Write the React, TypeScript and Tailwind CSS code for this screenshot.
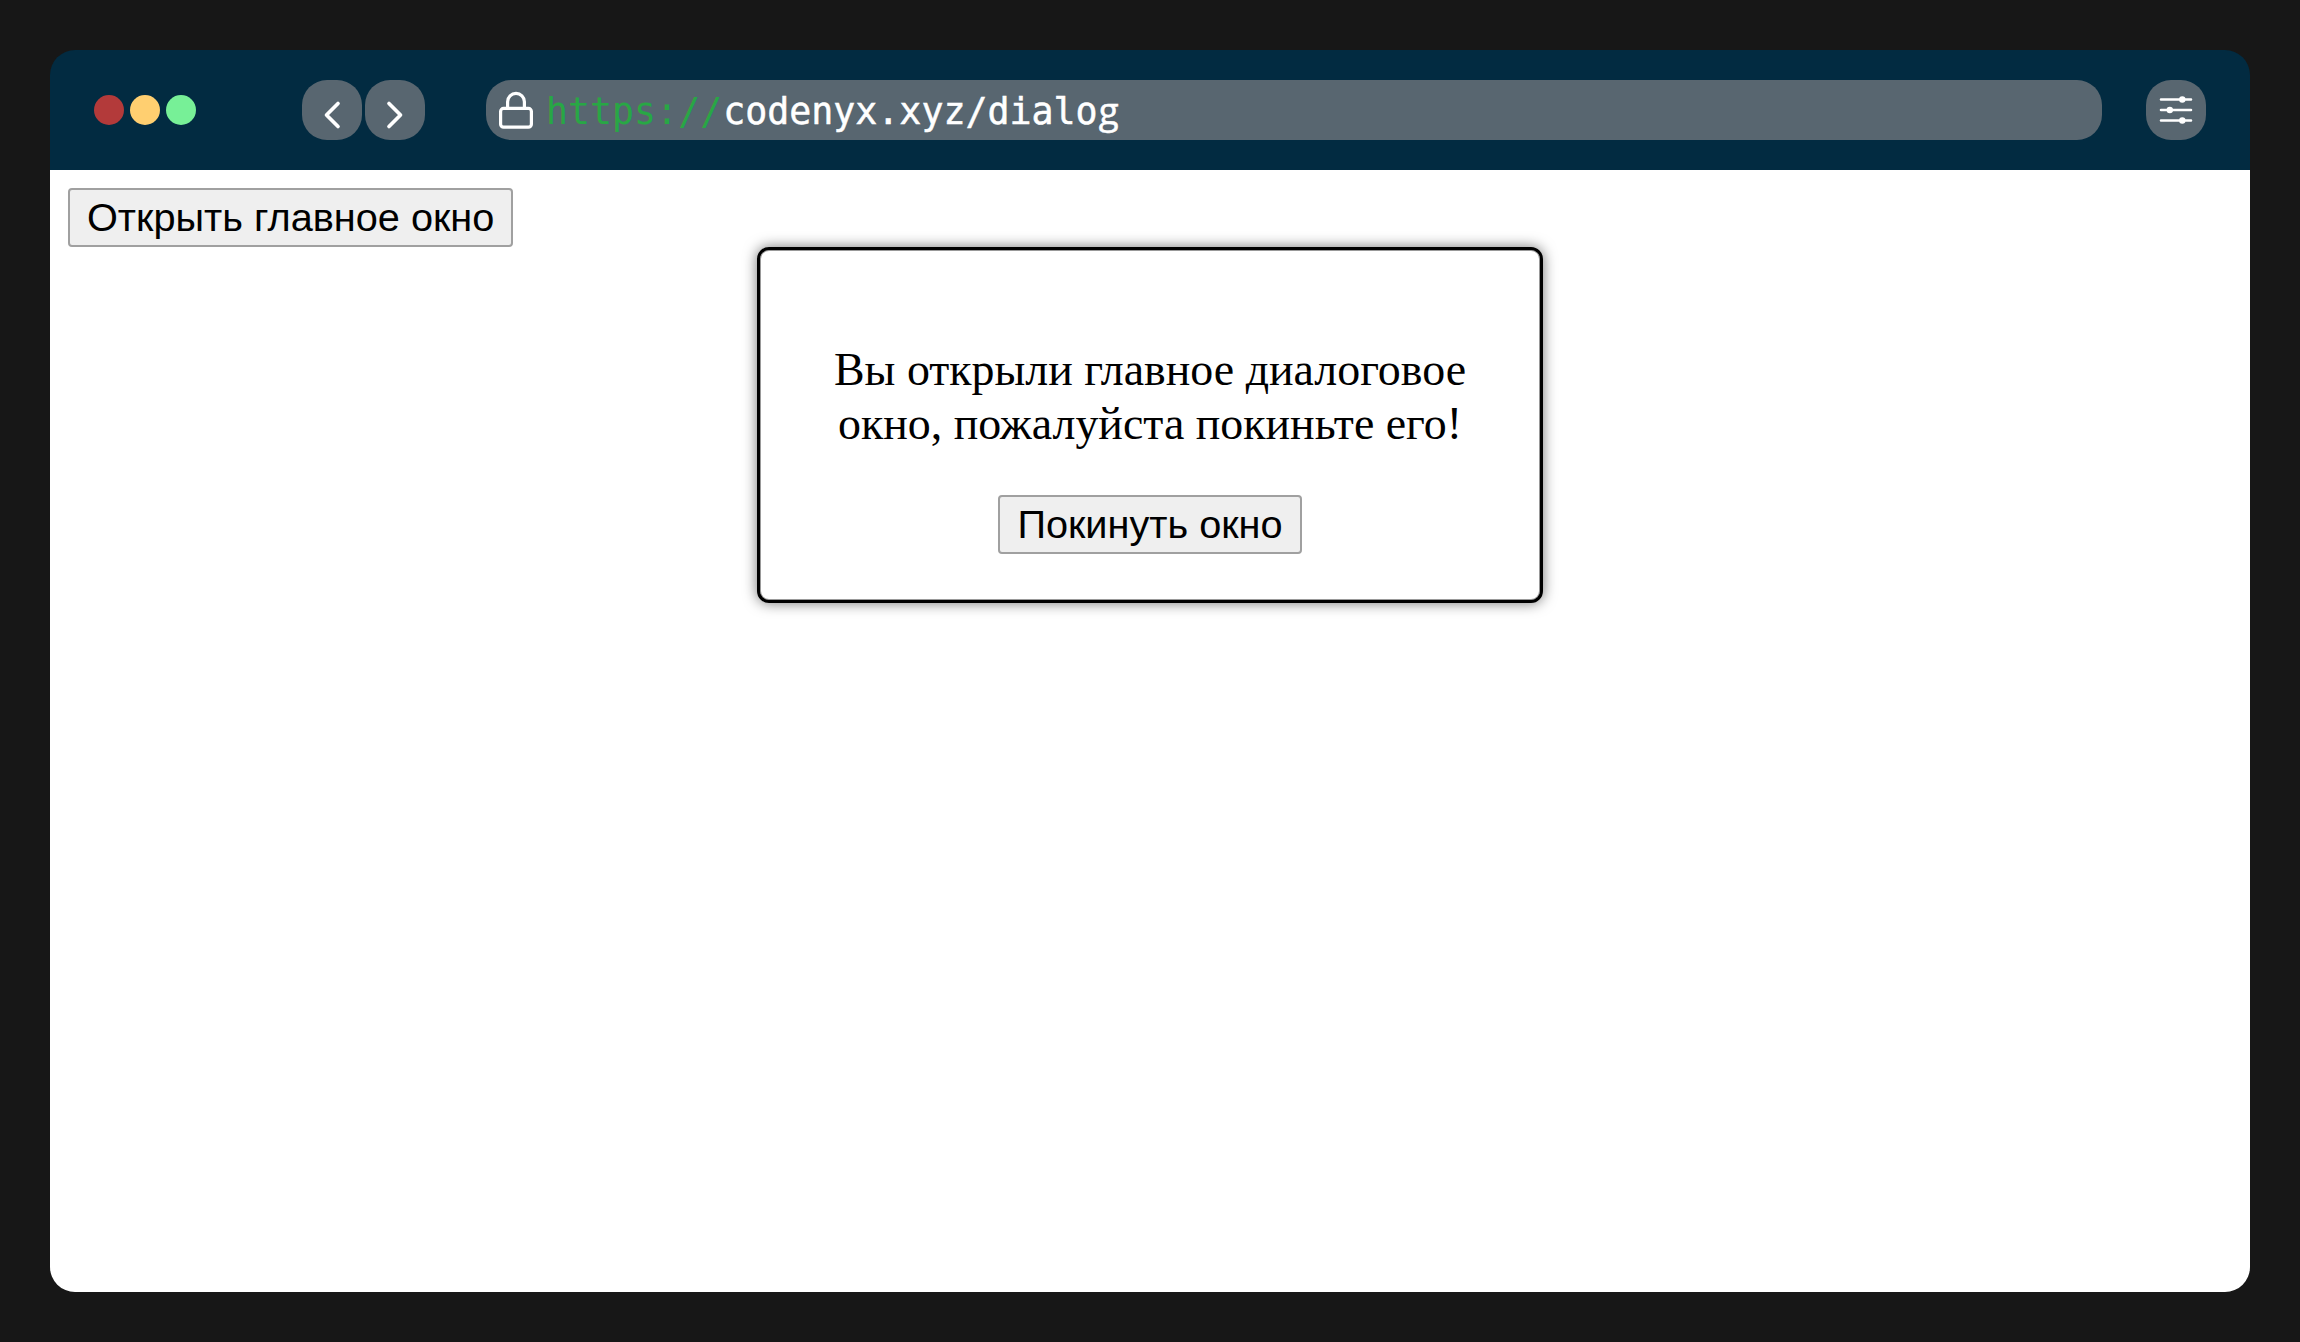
import React from "react";

function PageButton({ children }: { children: React.ReactNode }) {
  return (
    <button className="flex h-[59px] items-center justify-center rounded-[4px] border-2 border-[#a0a0a0] bg-[#efefef] px-[17px] font-['Liberation_Sans',Arial,sans-serif] text-[39.7px] leading-none whitespace-nowrap text-black">
      {children}
    </button>
  );
}

export default function App() {
  return (
    <div className="h-[1342px] w-[2300px] bg-[#171717] p-[50px]">
      <div className="flex h-[1242px] w-[2200px] flex-col">
        <header className="flex h-[120px] shrink-0 items-center rounded-t-[25px] bg-[#022b41] px-[44px]">
          <div className="flex gap-[6px]">
            <span className="size-[30px] rounded-full bg-[#b33a3a]" />
            <span className="size-[30px] rounded-full bg-[#ffcf70]" />
            <span className="size-[30px] rounded-full bg-[#77f097]" />
          </div>
          <nav className="ml-[106px] flex gap-[3px]">
            <button aria-label="Back" className="size-[60px] rounded-[25px] bg-[#586670]">
              <svg viewBox="0 0 60 60" className="size-[60px]" fill="none" stroke="#fff" strokeWidth="3.7" strokeLinecap="round" strokeLinejoin="round">
                <path d="M36 23.5 24.5 35 36 46.5" />
              </svg>
            </button>
            <button aria-label="Forward" className="size-[60px] rounded-[25px] bg-[#586670]">
              <svg viewBox="0 0 60 60" className="size-[60px]" fill="none" stroke="#fff" strokeWidth="3.7" strokeLinecap="round" strokeLinejoin="round">
                <path d="M24 23.5 35.5 35 24 46.5" />
              </svg>
            </button>
          </nav>
          <div className="ml-[61px] flex h-[60px] flex-1 items-center rounded-[25px] bg-[#586670] pl-[13px]">
            <svg viewBox="0 0 34 38" className="h-[38px] w-[34px]" fill="none" stroke="#fff" strokeWidth="3.2" strokeLinecap="round" strokeLinejoin="round">
              <rect x="1.6" y="17.4" width="30.8" height="18.8" rx="3" />
              <path d="M8.6 17V10.7a8.4 8.4 0 0 1 16.8 0V17" />
            </svg>
            <p className="ml-[13px] pt-[3px] font-['DejaVu_Sans_Mono',monospace] text-[36.6px] leading-none whitespace-pre text-white [-webkit-text-stroke:0.5px_#fff]">
              <span className="mr-[1px] text-[#28a745] [-webkit-text-stroke:0px]">https://</span>codenyx.xyz/dialo<span className="inline-block w-[22px] text-center font-['Open_Sans',sans-serif]">g</span>
            </p>
          </div>
          <button aria-label="Settings" className="ml-[44px] size-[60px] rounded-[25px] bg-[#586670]">
            <svg viewBox="0 0 60 60" className="size-[60px]" fill="#fff" stroke="#fff" strokeWidth="2.6" strokeLinecap="round">
              <path d="M15 19.5H45M15 30H45M15 40.5H45" />
              <g stroke="none">
                <circle cx="36.3" cy="19.5" r="3.2" />
                <circle cx="23.8" cy="30" r="3.2" />
                <circle cx="36.3" cy="40.5" r="3.2" />
              </g>
            </svg>
          </button>
        </header>
        <main className="flex flex-1 flex-col items-start rounded-b-[25px] bg-white pt-[18px] pl-[18px]">
          <PageButton>Открыть главное окно</PageButton>
          <div role="dialog" className="mr-[18px] flex h-[356px] w-[786px] flex-col items-center self-center rounded-[12px] border-[3px] border-black bg-white pt-[93px] shadow-[0_0_14px_rgba(0,0,0,0.55),inset_0_0_0_1px_rgba(0,0,0,0.4)]">
            <p className="text-center font-['Liberation_Serif','Times_New_Roman',serif] text-[45.9px] leading-[54px] whitespace-nowrap text-black">
              Вы открыли главное диалоговое<br />окно, пожалуйста покиньте его!
            </p>
            <div className="mt-[44px]">
              <PageButton>Покинуть окно</PageButton>
            </div>
          </div>
        </main>
      </div>
    </div>
  );
}
